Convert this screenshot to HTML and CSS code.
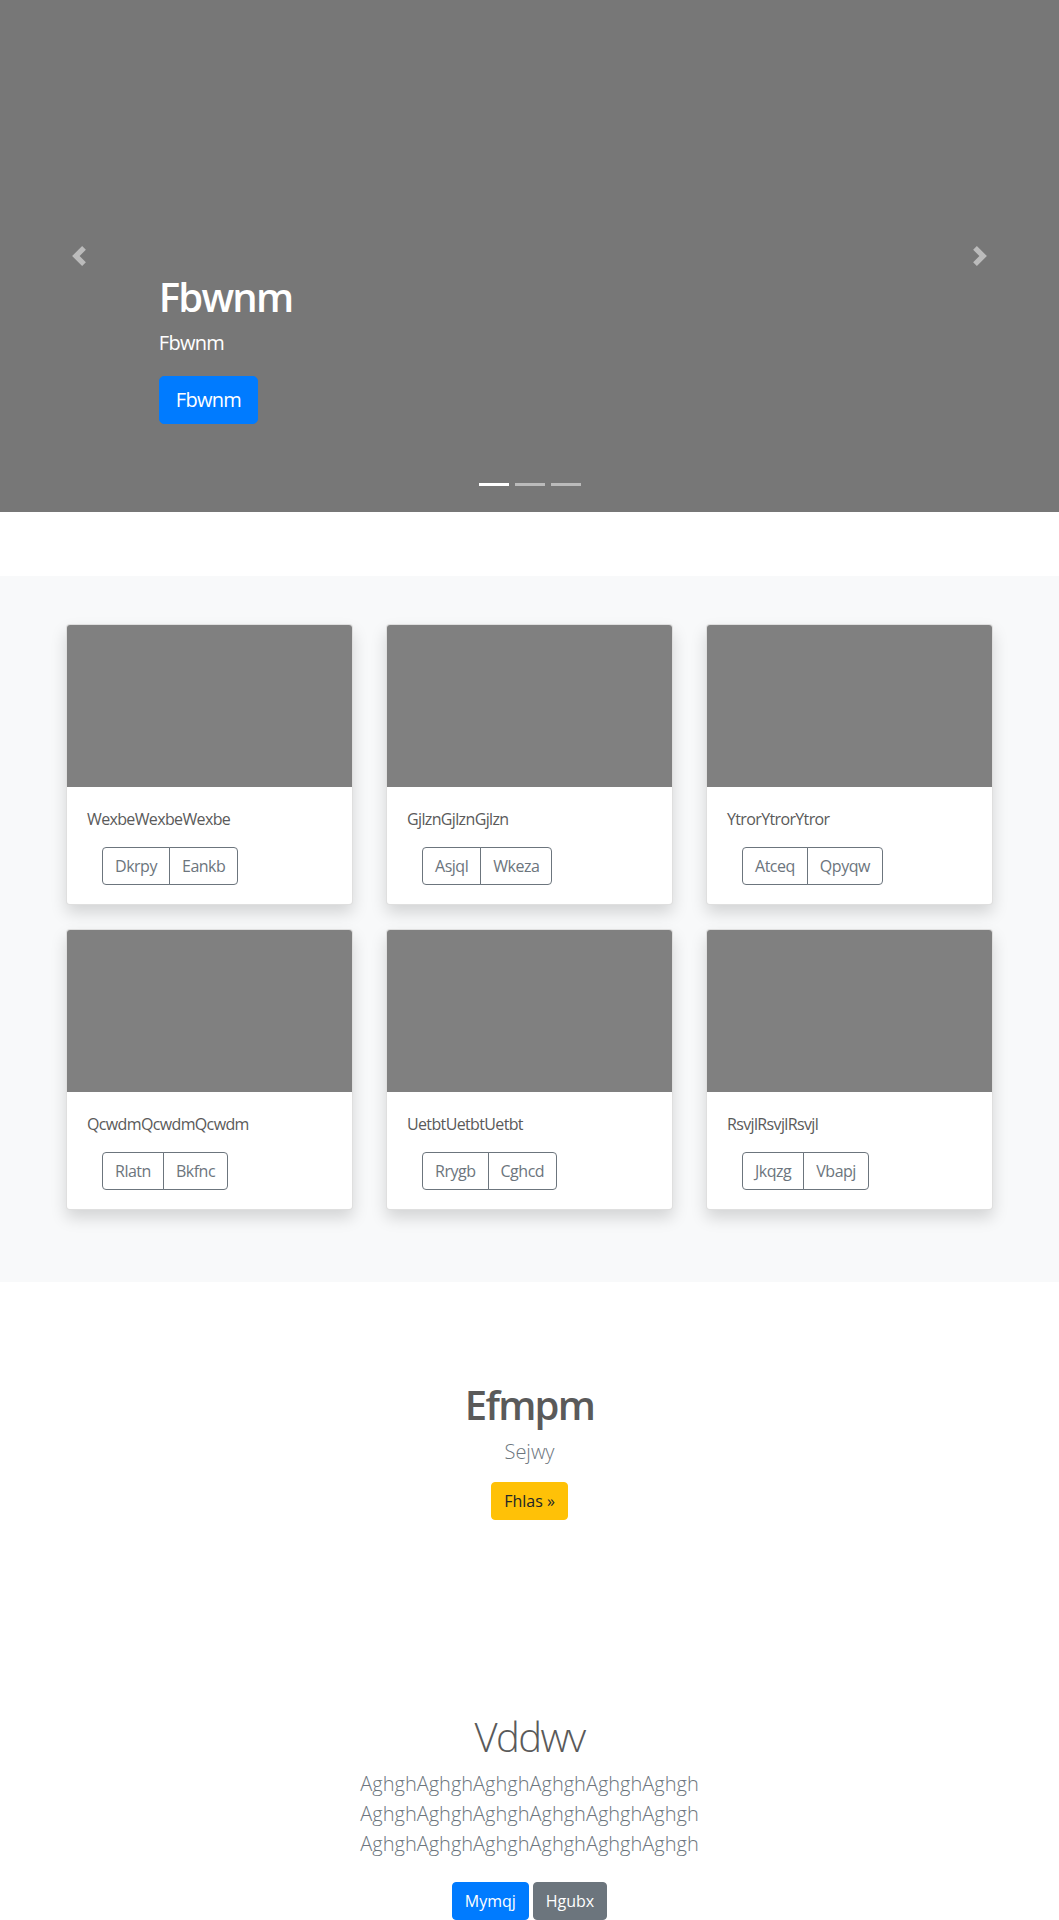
FILE: index.html
```html
<!DOCTYPE html>
<html lang="en">
<head>
<meta charset="utf-8">
<title>Fbwnm</title>
<link rel="stylesheet" href="styles.css">
</head>
<body>
<section class="hero">
  <a class="hero-control hero-prev" href="#" aria-label="Previous">
    <svg width="20" height="20" viewBox="0 0 8 8"><path d="M5.25 0l-4 4 4 4 1.5-1.5L4.25 4l2.5-2.5L5.25 0z"/></svg>
  </a>
  <div class="hero-caption">
    <h1 class="hero-title">Fbwnm</h1>
    <p class="hero-text">Fbwnm</p>
    <div class="hero-actions"><a class="btn btn-lg btn-primary" href="#">Fbwnm</a></div>
  </div>
  <a class="hero-control hero-next" href="#" aria-label="Next">
    <svg width="20" height="20" viewBox="0 0 8 8"><path d="M2.75 0l-1.5 1.5L3.75 4l-2.5 2.5L2.75 8l4-4-4-4z"/></svg>
  </a>
  <ol class="indicators">
    <li class="indicator active"></li>
    <li class="indicator"></li>
    <li class="indicator"></li>
  </ol>
</section>

<section class="album">
  <div class="album-grid">
    <div class="card">
      <div class="card-img"></div>
      <div class="card-body">
        <p class="card-text">WexbeWexbeWexbe</p>
        <div class="btn-group"><a class="btn btn-outline" href="#">Dkrpy</a><a class="btn btn-outline" href="#">Eankb</a></div>
      </div>
    </div>
    <div class="card">
      <div class="card-img"></div>
      <div class="card-body">
        <p class="card-text">GjlznGjlznGjlzn</p>
        <div class="btn-group"><a class="btn btn-outline" href="#">Asjql</a><a class="btn btn-outline" href="#">Wkeza</a></div>
      </div>
    </div>
    <div class="card">
      <div class="card-img"></div>
      <div class="card-body">
        <p class="card-text">YtrorYtrorYtror</p>
        <div class="btn-group"><a class="btn btn-outline" href="#">Atceq</a><a class="btn btn-outline" href="#">Qpyqw</a></div>
      </div>
    </div>
    <div class="card">
      <div class="card-img"></div>
      <div class="card-body">
        <p class="card-text">QcwdmQcwdmQcwdm</p>
        <div class="btn-group"><a class="btn btn-outline" href="#">Rlatn</a><a class="btn btn-outline" href="#">Bkfnc</a></div>
      </div>
    </div>
    <div class="card">
      <div class="card-img"></div>
      <div class="card-body">
        <p class="card-text">UetbtUetbtUetbt</p>
        <div class="btn-group"><a class="btn btn-outline" href="#">Rrygb</a><a class="btn btn-outline" href="#">Cghcd</a></div>
      </div>
    </div>
    <div class="card">
      <div class="card-img"></div>
      <div class="card-body">
        <p class="card-text">RsvjlRsvjlRsvjl</p>
        <div class="btn-group"><a class="btn btn-outline" href="#">Jkqzg</a><a class="btn btn-outline" href="#">Vbapj</a></div>
      </div>
    </div>
  </div>
</section>

<section class="feature">
  <h1 class="feature-title">Efmpm</h1>
  <p class="lead">Sejwy</p>
  <a class="btn btn-warning" href="#">Fhlas &raquo;</a>
</section>

<section class="intro">
  <h1 class="intro-title">Vddwv</h1>
  <p class="lead">AghghAghghAghghAghghAghghAghgh<br>AghghAghghAghghAghghAghghAghgh<br>AghghAghghAghghAghghAghghAghgh</p>
  <div class="intro-actions">
    <a class="btn btn-primary" href="#">Mymqj</a>
    <a class="btn btn-secondary" href="#">Hgubx</a>
  </div>
</section>
</body>
</html>
```

FILE: styles.css
```css
* { box-sizing: border-box; }

html, body {
  margin: 0;
  padding: 0;
}

body {
  font-family: "Open Sans", "Noto Sans", "Liberation Sans", sans-serif;
  font-size: 16px;
  line-height: 1.5;
  color: #5a5a5a;
  background: #fff;
}

h1, p { margin: 0; }

/* Buttons */
.btn {
  display: inline-block;
  font-size: 16px;
  line-height: 24px;
  font-weight: 400;
  padding: 6px 12px;
  border: 1px solid transparent;
  border-radius: 4px;
  text-decoration: none;
  text-align: center;
  white-space: nowrap;
}
.btn-lg {
  font-size: 20px;
  line-height: 30px;
  padding: 8px 16px;
  border-radius: 5px;
  letter-spacing: -0.035em;
}
.btn-primary { background: #007bff; border-color: #007bff; color: #fff; }
.btn-secondary { background: #6c757d; border-color: #6c757d; color: #fff; }
.btn-warning { background: #ffc107; border-color: #ffc107; color: #212529; }
.btn-outline {
  background: transparent;
  border-color: #6c757d;
  color: #6c757d;
  letter-spacing: -0.03em;
}

/* Hero */
.hero {
  position: relative;
  height: 512px;
  background: #777;
  margin-bottom: 64px;
  display: flex;
}
.hero-caption {
  flex: 1;
  display: flex;
  flex-direction: column;
  justify-content: flex-end;
  padding: 0 15% 88px;
  color: #fff;
}
.hero-title {
  font-size: 40px;
  line-height: 48px;
  font-weight: 600;
  letter-spacing: -0.045em;
  margin-bottom: 7px;
}
.hero-text {
  font-size: 20px;
  line-height: 30px;
  letter-spacing: -0.035em;
  margin-bottom: 18px;
}
.hero-actions { display: flex; }

.hero-control {
  position: absolute;
  top: 0;
  bottom: 0;
  width: 15%;
  display: flex;
  align-items: center;
  justify-content: center;
}
.hero-control svg { fill: #fff; opacity: .5; display: block; }
.hero-prev { left: 0; }
.hero-next { right: 0; }

.indicators {
  position: absolute;
  left: 0;
  right: 0;
  bottom: 26px;
  margin: 0;
  padding: 0;
  list-style: none;
  display: flex;
  justify-content: center;
  gap: 6px;
}
.indicator {
  width: 30px;
  height: 3px;
  background: rgba(255,255,255,.5);
}
.indicator.active { background: #fff; }

/* Album */
.album {
  background: #f8f9fa;
  padding: 48px 0 72px;
}
.album-grid {
  width: 927px;
  margin: 0 auto;
  display: grid;
  grid-template-columns: repeat(3, 1fr);
  column-gap: 33px;
  row-gap: 24px;
}
.card {
  background: #fff;
  border: 1px solid rgba(0,0,0,.125);
  border-radius: 4px;
  box-shadow: 0 8px 16px rgba(0,0,0,.15);
  overflow: hidden;
}
.card-img {
  height: 162px;
  background: #808080;
}
.card-body {
  padding: 20px 20px 19px;
}
.card-text {
  font-size: 16px;
  line-height: 24px;
  letter-spacing: -0.04em;
  margin-bottom: 16px;
}
.btn-group {
  display: flex;
  margin-left: 15px;
}
.btn-group .btn { border-radius: 0; }
.btn-group .btn:first-child { border-radius: 4px 0 0 4px; }
.btn-group .btn:last-child { border-radius: 0 4px 4px 0; margin-left: -1px; }

/* Feature */
.feature {
  text-align: center;
  padding-top: 99px;
}
.feature-title {
  font-size: 40px;
  line-height: 48px;
  font-weight: 600;
  letter-spacing: -0.043em;
  margin-bottom: 8px;
}
.lead {
  font-size: 20px;
  line-height: 30px;
  font-weight: 300;
  color: #6c757d;
  margin-bottom: 16px;
}
.feature .lead { margin-bottom: 15px; }

/* Intro */
.intro {
  text-align: center;
  padding-top: 193px;
}
.intro-title {
  font-size: 40px;
  line-height: 48px;
  font-weight: 300;
  letter-spacing: -0.04em;
  margin-bottom: 8px;
}
.intro .lead { margin-bottom: 23px; }
.intro-actions {
  display: flex;
  justify-content: center;
  gap: 4px;
}
```
